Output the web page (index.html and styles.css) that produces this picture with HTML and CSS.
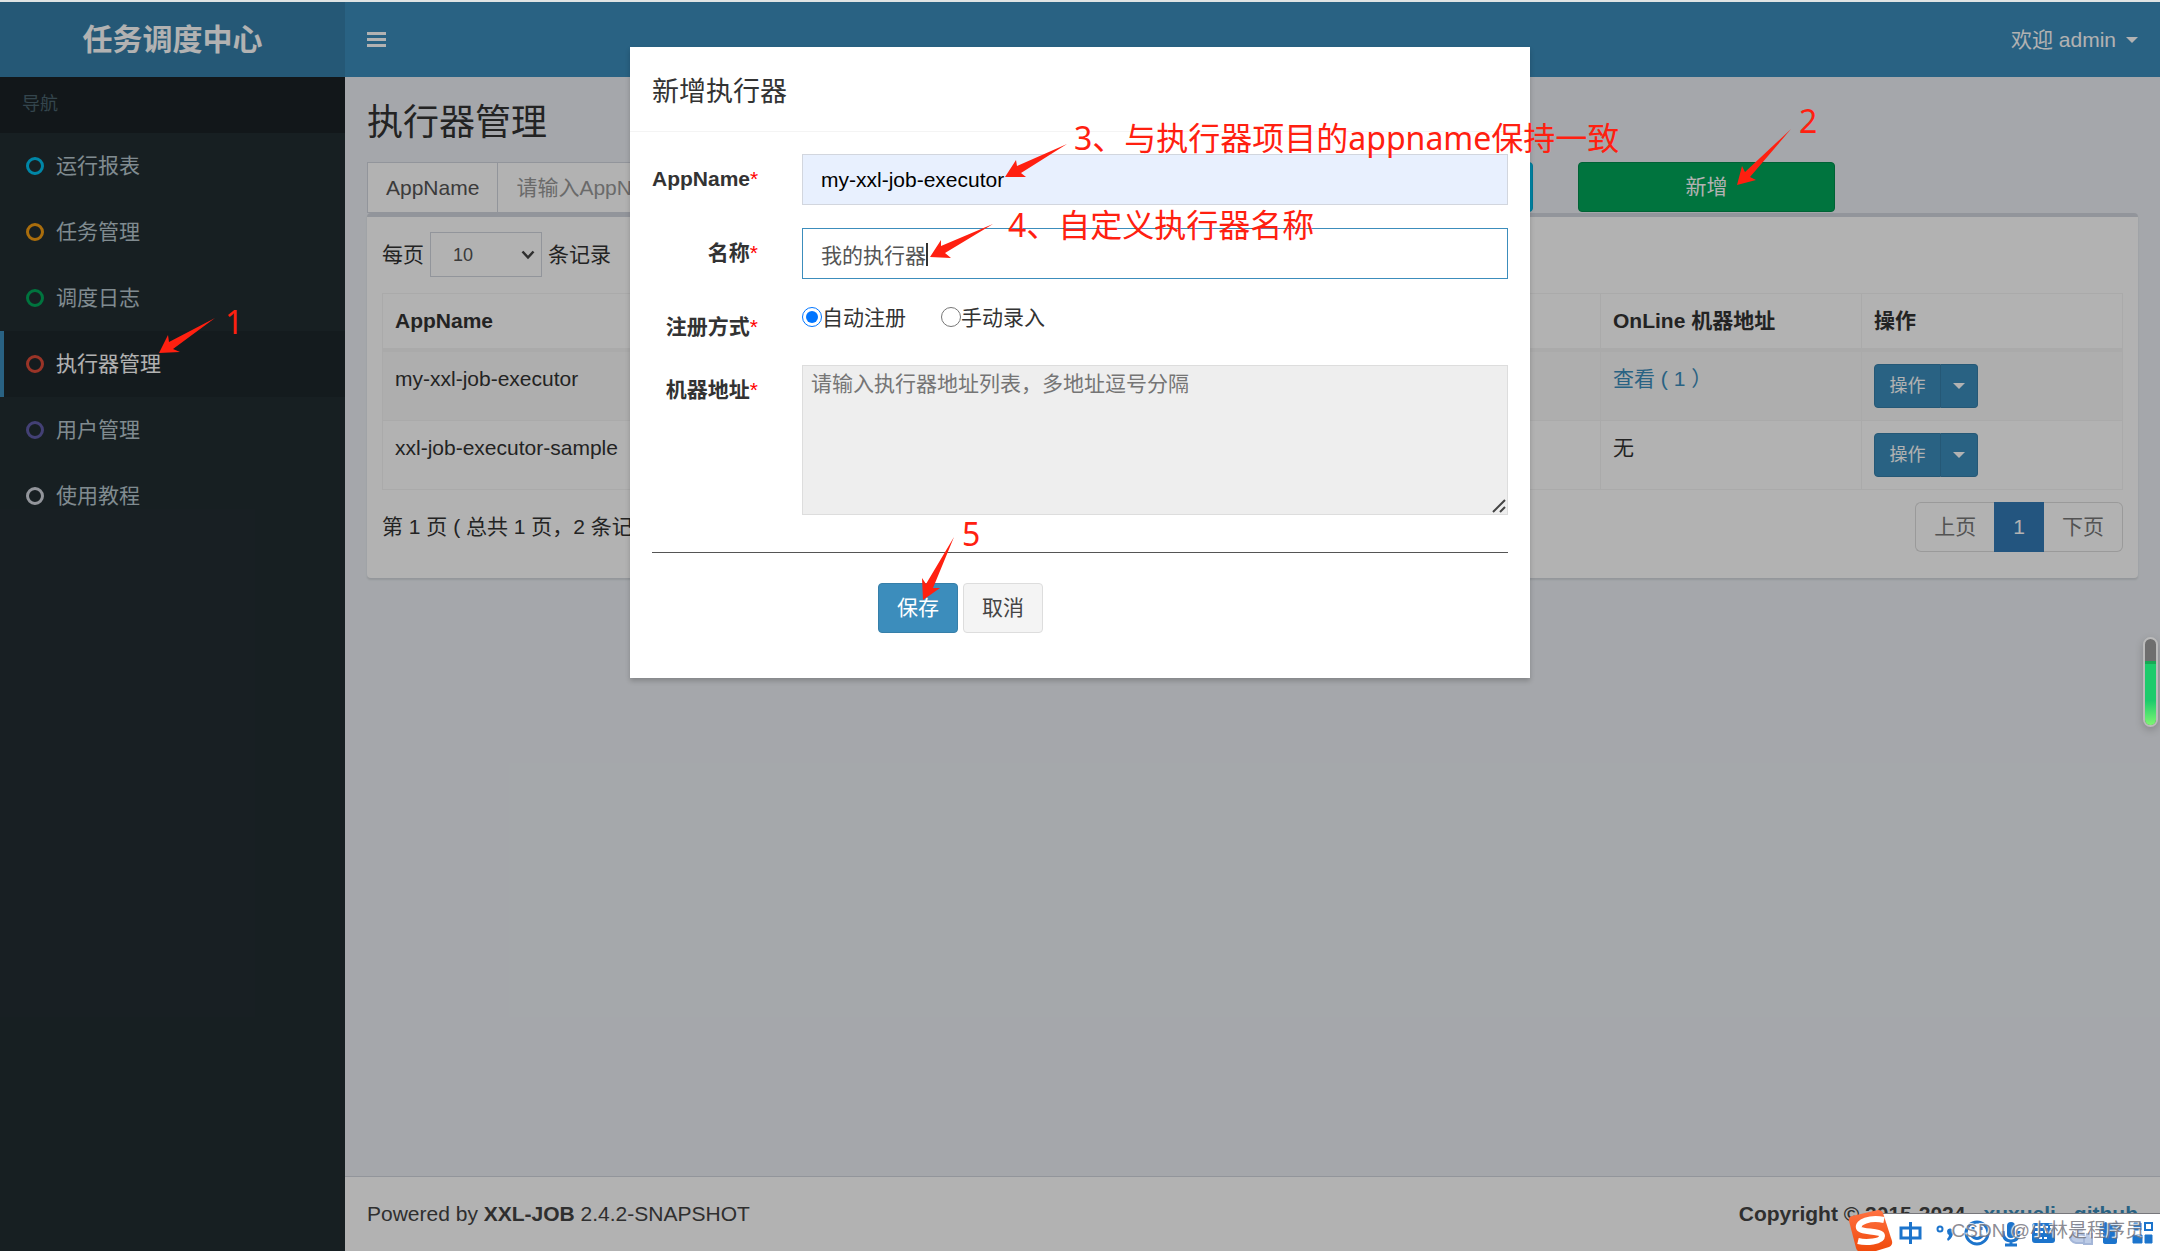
FILE: index.html
```html
<!DOCTYPE html>
<html lang="zh-CN">
<head>
<meta charset="utf-8">
<meta name="viewport" content="width=device-width, initial-scale=1">
<title>任务调度中心</title>
<link rel="stylesheet" href="styles.css">
</head>
<body>
<div class="app">
  <aside class="sidebar">
    <a class="logo" href="#">任务调度中心</a>
    <div class="nav-header">导航</div>
    <nav class="nav">
      <a class="nav-item" href="#"><span class="ring ring-aqua"></span>运行报表</a>
      <a class="nav-item" href="#"><span class="ring ring-yellow"></span>任务管理</a>
      <a class="nav-item" href="#"><span class="ring ring-green"></span>调度日志</a>
      <a class="nav-item active" href="#"><span class="ring ring-red"></span>执行器管理</a>
      <a class="nav-item" href="#"><span class="ring ring-purple"></span>用户管理</a>
      <a class="nav-item" href="#"><span class="ring ring-gray"></span>使用教程</a>
    </nav>
  </aside>
  <div class="main">
    <header class="topbar">
      <button class="toggle" type="button" aria-label="切换导航">
        <svg width="20" height="16" viewBox="0 0 20 16"><path d="M0 0h19v3H0zM0 6h19v3H0zM0 12h19v3H0z" fill="#fff"/></svg>
      </button>
      <a class="user" href="#">欢迎 admin <span class="caret"></span></a>
    </header>
    <main class="content">
      <h1 class="page-title">执行器管理</h1>
      <form class="filters">
        <div class="group group-wide">
          <label class="addon" for="q-app">AppName</label>
          <input class="control" id="q-app" type="text" placeholder="请输入AppName">
        </div>
        <div class="group group-wide">
          <label class="addon" for="q-name">名称</label>
          <input class="control" id="q-name" type="text" placeholder="请输入名称">
        </div>
        <button class="btn btn-info" type="button">搜索</button>
        <button class="btn btn-success" type="button">新增</button>
      </form>
      <section class="box">
        <div class="length">
          <label for="len">每页</label>
          <div class="select-wrap">
            <select class="select" id="len"><option>10</option><option>20</option><option>50</option></select>
            <svg class="chevron" width="14" height="10" viewBox="0 0 14 10"><path d="M1.500 1.500L7 7.500L12.500 1.500" fill="none" stroke="#444" stroke-width="2.500"/></svg>
          </div>
          <span>条记录</span>
        </div>
        <table class="table">
          <colgroup><col class="col-app"><col class="col-name"><col class="col-type"><col class="col-online"><col class="col-ops"></colgroup>
          <thead>
            <tr><th>AppName</th><th>名称</th><th>注册方式</th><th>OnLine 机器地址</th><th>操作</th></tr>
          </thead>
          <tbody>
            <tr>
              <td>my-xxl-job-executor</td><td>我的执行器</td><td>自动注册</td>
              <td><a class="link" href="#">查看 ( 1 ）</a></td>
              <td><div class="split"><button class="split-main" type="button">操作</button><button class="split-drop" type="button" aria-label="更多操作"><span class="caret"></span></button></div></td>
            </tr>
            <tr>
              <td>xxl-job-executor-sample</td><td>示例执行器</td><td>自动注册</td>
              <td>无</td>
              <td><div class="split"><button class="split-main" type="button">操作</button><button class="split-drop" type="button" aria-label="更多操作"><span class="caret"></span></button></div></td>
            </tr>
          </tbody>
        </table>
        <div class="table-foot">
          <div class="info">第 1 页 ( 总共 1 页，2 条记录 )</div>
          <nav class="pager"><a href="#">上页</a><a class="current" href="#">1</a><a href="#">下页</a></nav>
        </div>
      </section>
    </main>
    <footer class="footer">
      <div>Powered by <b>XXL-JOB</b> 2.4.2-SNAPSHOT</div>
      <div class="copyright"><span>Copyright © 2015-2024</span><a class="link" href="#">xuxueli</a><a class="link" href="#">github</a></div>
    </footer>
  </div>
</div>

<div class="backdrop">
  <div class="modal" role="dialog" aria-labelledby="modal-title">
    <h2 class="modal-title" id="modal-title">新增执行器</h2>
    <form class="modal-body">
      <div class="row">
        <label class="row-label" for="f-app">AppName<span class="req">*</span></label>
        <input class="field filled" id="f-app" type="text" value="my-xxl-job-executor">
      </div>
      <div class="row">
        <label class="row-label" for="f-name">名称<span class="req">*</span></label>
        <input class="field focused" id="f-name" type="text" value="我的执行器">
      </div>
      <div class="row">
        <div class="row-label">注册方式<span class="req">*</span></div>
        <div class="radios">
          <label class="radio"><input type="radio" name="type" checked>自动注册</label>
          <label class="radio"><input type="radio" name="type">手动录入</label>
        </div>
      </div>
      <div class="row">
        <label class="row-label" for="f-addr">机器地址<span class="req">*</span></label>
        <textarea class="area" id="f-addr" placeholder="请输入执行器地址列表，多地址逗号分隔" readonly></textarea>
      </div>
      <hr class="rule">
      <div class="actions">
        <button class="btn btn-primary" type="button">保存</button>
        <button class="btn btn-default" type="button">取消</button>
      </div>
    </form>
  </div>
</div>

<div class="notes">
  <svg class="arrows" width="2160" height="700" viewBox="0 0 2160 700" fill="#ff2010">
    <path d="M159 353L168 335L169 342L215 318L173 349L180 352Z"/>
    <path d="M1737 185L1742 166L1745 172L1791 129L1750 177L1756 180Z"/>
    <path d="M1005 177L1016 160L1017 166L1067 144L1021 173L1026 177Z"/>
    <path d="M930 257L941 240L941 246L993 224L945 253L951 258Z"/>
    <path d="M923 600L922 578L926 584L954 537L933 588L940 588Z"/>
  </svg>
  <span class="note note-1">1</span>
  <span class="note note-2">2</span>
  <span class="note note-3">3、与执行器项目的appname保持一致</span>
  <span class="note note-4">4、自定义执行器名称</span>
  <span class="note note-5">5</span>
  <span class="caret-line"></span>
</div>

<div class="meter"><div class="meter-fill"></div></div>

<div class="ime">
  <svg width="312" height="41" viewBox="0 0 312 41">
    <defs><linearGradient id="g" x1="0" y1="0" x2="0" y2="1"><stop offset="0" stop-color="#ff7242"/><stop offset="1" stop-color="#f04a0c"/></linearGradient></defs>
    <path d="M22 3H312V41H22Z" fill="#fff"/>
    <path d="M22 3H312V4H22Z" fill="#77777c"/>
    <path d="M4 6L30 0Q34 0 35 3L44 31Q45 35 41 37L28 41H10Q9 41 8 38L1 11Q0 7 4 6Z" fill="url(#g)"/>
    <path d="M36 10C22 7 9 12 11 18C13 23 34 20 34 26C34 32 18 33 10 31" fill="none" stroke="#fff" stroke-width="6"/>
    <g fill="none" stroke="#1c74cc" stroke-width="3">
      <path d="M53 18H72V28H53ZM62.500 12V34"/>
      <circle cx="92" cy="19" r="2.500" stroke-width="2"/>
      <circle cx="129" cy="23" r="11"/>
      <path d="M123 25Q129 32 135 25M125 17V20M133 17V20"/>
      <path d="M155 21Q155 31 163 31Q171 31 171 21M163 31V35M157 35H169"/>
    </g>
    <path d="M99 21a3 3 0 0 1 6 1q0 6-5 9l-1-2q2-2 2-4q-2-1-2-4z" fill="#1c74cc"/>
    <rect x="159" y="12" width="8" height="16" rx="4" fill="#1c74cc"/>
    <rect x="184" y="13" width="23" height="20" rx="3" fill="#1c74cc"/>
    <path d="M187 17H204M187 22H204M191 28H200" stroke="#fff" stroke-width="2" stroke-dasharray="3 2"/>
    <path d="M222 26Q228 20 236 25V33H228Q222 32 222 26ZM238 24H244V34H236V30" fill="#bccbe6" stroke="#a4b6d8" stroke-width="2"/>
    <circle cx="231" cy="18" r="5" fill="#bccbe6"/>
    <path d="M252 14L258 12Q262 16 266 12L272 14L273 21H269V32Q269 34 267 34H258Q255 34 255 32V21H251Z" fill="#1c74cc"/>
    <path d="M286 13H293V20H286ZM285 25H294V33H285ZM297 25H304V33H297Z" fill="#1c74cc" stroke="#1c74cc" stroke-width="1"/>
    <rect x="297" y="13" width="7" height="7" fill="none" stroke="#1c74cc" stroke-width="2"/>
  </svg>
  <span class="watermark">CSDN @小林是程序员</span>
</div>
</body>
</html>
```
FILE: styles.css
```css
* { box-sizing: border-box; }

body {
  margin: 0;
  font: 21px/30px "Liberation Sans", Arial, "Noto Sans CJK SC", sans-serif;
  color: #333;
  background: #ecf0f5;
}

a { text-decoration: none; }
button, input, select, textarea { font: inherit; }

/* Shell */
.app {
  display: flex;
  min-height: 100vh;
  border-top: 2px solid #dfe4e4;
}

.sidebar {
  width: 345px;
  flex: none;
  background: #222d32;
}

.logo {
  display: block;
  height: 75px;
  line-height: 75px;
  text-align: center;
  font-size: 30px;
  font-weight: bold;
  color: #fff;
  background: #367fa9;
}

.nav-header {
  height: 56px;
  padding: 0 22px;
  line-height: 54px;
  font-size: 18px;
  color: #4b646f;
  background: #1a2226;
}

.nav-item {
  display: flex;
  align-items: center;
  gap: 12px;
  height: 66px;
  padding-left: 22px;
  border-left: 4px solid transparent;
  color: #b8c7ce;
}

.nav-item.active {
  color: #fff;
  background: #1e282c;
  border-left-color: #3c8dbc;
}

.ring {
  width: 18px;
  height: 18px;
  border: 3px solid;
  border-radius: 50%;
}
.ring-aqua { color: #00c0ef; }
.ring-yellow { color: #f39c12; }
.ring-green { color: #00a65a; }
.ring-red { color: #dd4b39; }
.ring-purple { color: #605ca8; }
.ring-gray { color: #d2d6de; }

.main {
  flex: 1;
  min-width: 0;
  display: flex;
  flex-direction: column;
}

.topbar {
  display: flex;
  justify-content: space-between;
  align-items: center;
  height: 75px;
  padding: 0 22px;
  background: #3c8dbc;
}

.toggle {
  display: flex;
  padding: 0;
  border: 0;
  background: none;
}

.user {
  display: flex;
  align-items: center;
  gap: 10px;
  color: #fff;
}

.caret {
  border: 6px solid transparent;
  border-top-color: currentColor;
  border-bottom: 0;
}

.content {
  flex: 1;
  padding: 22px;
}

.page-title {
  margin: 0 0 15px;
  font-size: 36px;
  line-height: 48px;
  font-weight: normal;
}

/* Filter bar */
.filters {
  display: grid;
  grid-template-columns: repeat(12, minmax(0, 1fr));
  column-gap: 45px;
}

.filters .btn { grid-column: span 2; }

.group {
  display: flex;
  height: 51px;
}
.group-wide { grid-column: span 3; }

.addon {
  padding: 10px 18px;
  color: #555;
  background: #fff;
  border: 1px solid #d2d6de;
  border-right: 0;
  white-space: nowrap;
}

.control {
  flex: 1;
  min-width: 0;
  padding: 0 18px;
  border: 1px solid #d2d6de;
  background: #fff;
}
.control::placeholder { color: #999; }

.btn {
  height: 50px;
  padding: 0 17px;
  border: 1px solid;
  border-radius: 4px;
  color: #fff;
}
.btn-info { background: #00c0ef; border-color: #00acd6; }
.btn-success { background: #00a65a; border-color: #008d4c; }
.btn-primary { background: #3c8dbc; border-color: #367fa9; }
.btn-default { background: #f4f4f4; border-color: #ddd; color: #444; }

/* Table box */
.box {
  padding: 15px 15px 26px;
  border-top: 4px solid #d2d6de;
  border-radius: 4px;
  background: #fff;
  box-shadow: 0 2px 2px rgba(0, 0, 0, .1);
}

.length {
  display: flex;
  align-items: center;
  gap: 6px;
  margin-bottom: 16px;
}

.select-wrap { position: relative; }

.select {
  appearance: none;
  display: block;
  width: 112px;
  height: 45px;
  padding: 0 22px;
  font-size: 18px;
  color: #555;
  background: #fff;
  border: 1px solid #d2d6de;
  border-radius: 0;
}

.chevron {
  position: absolute;
  right: 7px;
  top: 18px;
  pointer-events: none;
}

.table {
  width: 100%;
  table-layout: fixed;
  border-collapse: separate;
  border-spacing: 0;
  border: 1px solid #f4f4f4;
  border-width: 1px 0 0 1px;
}
.col-app { width: 25%; }
.col-name { width: 25%; }
.col-online { width: 15%; }
.col-ops { width: 15%; }

.table th, .table td {
  padding: 12px;
  text-align: left;
  vertical-align: top;
  border: 1px solid #f4f4f4;
  border-width: 0 1px 1px 0;
}
.table th { border-bottom-width: 4px; }
.table tbody tr:nth-child(odd) { background: #f9f9f9; }

.link { color: #3c8dbc; }

.split { display: flex; }
.split button {
  height: 44px;
  border: 1px solid #367fa9;
  color: #fff;
  background: #3c8dbc;
  font-size: 18px;
}
.split .split-main {
  width: 67px;
  padding: 0;
  border-radius: 4px 0 0 4px;
}
.split .split-drop {
  display: grid;
  place-items: center;
  width: 37px;
  padding: 0;
  border-left: 0;
  border-radius: 0 4px 4px 0;
}

.table-foot {
  display: flex;
  justify-content: space-between;
  align-items: center;
  padding-top: 12px;
}

.pager { display: flex; }
.pager a {
  padding: 9px 18px;
  color: #777;
  border: 1px solid #ddd;
}
.pager a:first-child { border-radius: 6px 0 0 6px; border-right: 0; }
.pager a:last-child { border-radius: 0 6px 6px 0; border-left: 0; }
.pager .current { color: #fff; background: #337ab7; border-color: #337ab7; }

.footer {
  display: flex;
  justify-content: space-between;
  padding: 22px;
  color: #444;
  background: #fff;
  border-top: 1px solid #d2d6de;
}
.copyright {
  display: flex;
  gap: 18px;
  font-weight: bold;
}

/* Modal */
.backdrop {
  position: absolute;
  inset: 2px 0 0;
  padding-top: 45px;
  background: rgba(0, 0, 0, .3);
}

.modal {
  width: 900px;
  max-width: 100%;
  margin: 0 auto;
  background: #fff;
  box-shadow: 0 3px 5px rgba(0, 0, 0, .2);
}

.modal-title {
  margin: 0;
  padding: 25px 22px 19px;
  font-size: 27px;
  line-height: 40px;
  font-weight: normal;
  border-bottom: 1px solid #f4f4f4;
}

.modal-body { padding: 22px 22px 45px; }

.row {
  display: flex;
  gap: 44px;
  margin-bottom: 23px;
}

.row-label {
  width: 106px;
  flex: none;
  padding-top: 10px;
  text-align: right;
  font-weight: bold;
  white-space: nowrap;
}
.req { color: #f00; font-weight: normal; }

.field, .area {
  flex: 1;
  min-width: 0;
  color: #555;
  border: 1px solid #d2d6de;
  border-radius: 0;
}
.field {
  height: 51px;
  padding: 0 18px;
}
.filled { background: #e8f0fe; color: #000; }
.focused { background: #fff; border-color: #3c8dbc; }

.area {
  height: 150px;
  padding: 3px 8px;
  background: #eee;
  border-color: #ddd;
  resize: vertical;
}
.area::placeholder { color: #757575; }
.area::-webkit-resizer {
  background: url("data:image/svg+xml,%3Csvg xmlns='http://www.w3.org/2000/svg' width='15' height='15'%3E%3Cpath d='M1 13L13 1M8 13L13 8' stroke='%23444' stroke-width='2'/%3E%3C/svg%3E") no-repeat;
}

.radios {
  display: flex;
  gap: 35px;
}
.radio {
  display: flex;
  align-items: flex-start;
  line-height: 32px;
}
.radio input {
  width: 20px;
  height: 20px;
  margin: 5px 0 0;
}

.rule {
  margin: 37px 0 30px;
  border: 0;
  border-top: 1px solid #555;
}

.actions {
  display: flex;
  gap: 5px;
  padding-left: 226px;
}
.actions .btn { width: 80px; }

/* Annotations drawn over the page */
.arrows {
  position: absolute;
  left: 0;
  top: 0;
  pointer-events: none;
}
.note {
  position: absolute;
  font: 32px/40px "Noto Sans", "Noto Sans CJK SC", sans-serif;
  color: #ff2010;
  white-space: nowrap;
}
.note-1 { left: 225px; top: 302px; }
.note-2 { left: 1799px; top: 101px; }
.note-3 { left: 1074px; top: 118px; }
.note-4 { left: 1008px; top: 205px; }
.note-5 { left: 962px; top: 514px; }

.caret-line {
  position: absolute;
  left: 926px;
  top: 243px;
  width: 2px;
  height: 23px;
  background: #333;
}

.meter {
  position: absolute;
  right: 2px;
  top: 637px;
  width: 15px;
  height: 90px;
  padding-top: 22px;
  border: 2px solid #bbb;
  border-radius: 8px;
  background: #6e6e6e;
  box-shadow: 0 3px 8px rgba(0, 0, 0, .2);
  overflow: hidden;
}
.meter-fill {
  height: 100%;
  border-top: 3px solid #18a855;
  background: linear-gradient(#1ccb6b 60%, #7df573);
}

.ime {
  position: absolute;
  right: 0;
  bottom: 0;
  height: 41px;
}
.watermark {
  position: absolute;
  right: 16px;
  top: 6px;
  font-size: 19px;
  color: rgba(110, 110, 120, .8);
  text-shadow: -1px -1px 1px #fff;
  white-space: nowrap;
}
```
